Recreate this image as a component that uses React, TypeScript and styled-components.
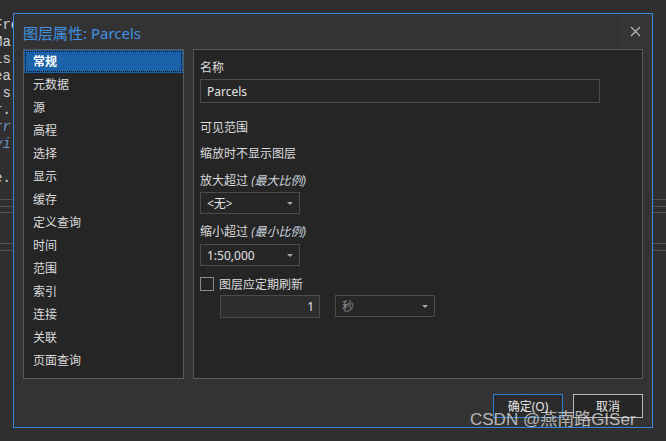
import React from "react";
import styled, { createGlobalStyle } from "styled-components";

const GlobalStyle = createGlobalStyle`
  html, body {
    margin: 0;
    padding: 0;
    background: #2f2f2f;
  }
  * {
    box-sizing: border-box;
  }
`;

const UI_FONT = `"Segoe UI", "Noto Sans", "Noto Sans CJK SC", sans-serif`;

const tabs = [
  "常规",
  "元数据",
  "源",
  "高程",
  "选择",
  "显示",
  "缓存",
  "定义查询",
  "时间",
  "范围",
  "索引",
  "连接",
  "关联",
  "页面查询",
];

const codeLines = [
  { text: "Frc", hint: false },
  { text: "Ma", hint: false },
  { text: "is", hint: false },
  { text: "ea", hint: false },
  { text: ".s", hint: false },
  { text: "r.", hint: false },
  { text: "rr.", hint: true },
  { text: "yi", hint: true },
  { text: " ", hint: false },
  { text: "e.", hint: false },
];

export default function App() {
  return (
    <>
      <GlobalStyle />
      <Desktop>
        <Backdrop>
          <Code>
            {codeLines.map((line, i) => (
              <CodeLine key={i} $hint={line.hint}>
                {line.text}
              </CodeLine>
            ))}
          </Code>
          <Rules>
            <Rule $gap={0} />
            <Rule $gap={6} />
            <Rule $gap={5} />
            <Rule $gap={30} />
            <Rule $gap={6} />
          </Rules>
        </Backdrop>

        <Dialog>
          <TitleBar>
            <Title>图层属性: Parcels</Title>
            <CloseButton aria-label="关闭">
              <svg width="11" height="11" viewBox="0 0 11 11">
                <path
                  d="M1 1 L10 10 M10 1 L1 10"
                  stroke="#b5b5b5"
                  strokeWidth="1.3"
                  fill="none"
                />
              </svg>
            </CloseButton>
          </TitleBar>

          <Body>
            <TabList>
              {tabs.map((name, i) => (
                <TabItem key={name} $active={i === 0}>
                  {name}
                </TabItem>
              ))}
            </TabList>

            <Page>
              <Label $top={10}>名称</Label>
              <TextBox $top={3}>Parcels</TextBox>

              <Label $top={17}>可见范围</Label>
              <Label $top={10}>缩放时不显示图层</Label>

              <Label $top={11}>
                放大超过 <Hint>(最大比例)</Hint>
              </Label>
              <Combo $top={3}>
                <span>&lt;无&gt;</span>
                <Caret />
              </Combo>

              <Label $top={10}>
                缩小超过 <Hint>(最小比例)</Hint>
              </Label>
              <Combo $top={4}>
                <span>1:50,000</span>
                <Caret />
              </Combo>

              <CheckRow>
                <CheckBox />
                <span>图层应定期刷新</span>
              </CheckRow>
              <IntervalRow>
                <NumberBox>1</NumberBox>
                <Combo $top={0} $muted>
                  <span>秒</span>
                  <Caret />
                </Combo>
              </IntervalRow>
            </Page>
          </Body>

          <Footer>
            <Button $primary>确定(O)</Button>
            <Button>取消</Button>
          </Footer>
        </Dialog>

        <Watermark>CSDN @燕南路GISer</Watermark>
      </Desktop>
    </>
  );
}

const Desktop = styled.div`
  position: relative;
  width: 666px;
  height: 441px;
  overflow: hidden;
  background: #2f2f2f;
  font-family: ${UI_FONT};
`;

const Backdrop = styled.div`
  position: absolute;
  inset: 0;
`;

const Code = styled.div`
  display: flex;
  flex-direction: column;
  padding-top: 17px;
  margin-left: -6px;
  font-family: "Liberation Mono", "DejaVu Sans Mono", monospace;
  font-size: 14px;
  line-height: 17px;
`;

const CodeLine = styled.div<{ $hint: boolean }>`
  white-space: pre;
  color: ${(p) => (p.$hint ? "#6f8fc4" : "#d0d0d0")};
  font-style: ${(p) => (p.$hint ? "italic" : "normal")};
`;

const Rules = styled.div`
  display: flex;
  flex-direction: column;
  margin-top: 12px;
`;

const Rule = styled.div<{ $gap: number }>`
  height: 1px;
  margin-top: ${(p) => p.$gap}px;
  background: #505050;
`;

const Dialog = styled.div`
  position: absolute;
  left: 13px;
  top: 13px;
  width: 640px;
  height: 415px;
  display: flex;
  flex-direction: column;
  border: 1px solid #3686da;
  background: #333333;
`;

const TitleBar = styled.div`
  height: 35px;
  display: flex;
  align-items: center;
  justify-content: space-between;
  padding-left: 9px;
`;

const Title = styled.div`
  color: #3f92e4;
  font-size: 15px;
  margin-top: 1px;
`;

const CloseButton = styled.div`
  width: 34px;
  height: 34px;
  display: flex;
  align-items: center;
  justify-content: center;
  background: #363636;
  align-self: flex-start;
`;

const Body = styled.div`
  display: flex;
  gap: 9px;
  padding: 0 9px;
  height: 330px;
`;

const Panel = styled.div`
  border: 1px solid #595959;
  background: #252525;
`;

const TabList = styled(Panel)`
  width: 161px;
  display: flex;
  flex-direction: column;
`;

const TabItem = styled.div<{ $active: boolean }>`
  height: 23px;
  display: flex;
  align-items: center;
  padding: 0 0 2px 9px;
  font-size: 12px;
  color: ${(p) => (p.$active ? "#ffffff" : "#dcdcdc")};
  font-weight: ${(p) => (p.$active ? 700 : 400)};
  background: ${(p) => (p.$active ? "#1c62aa" : "transparent")};
  outline: ${(p) => (p.$active ? "1px dotted #0d0d0d" : "none")};
  outline-offset: -2px;
`;

const Page = styled(Panel)`
  flex: 1;
  display: flex;
  flex-direction: column;
  align-items: flex-start;
  padding-left: 6px;
`;

const Label = styled.div<{ $top: number }>`
  margin-top: ${(p) => p.$top}px;
  height: 16px;
  line-height: 16px;
  font-size: 12px;
  color: #dcdcdc;
  white-space: pre;
`;

const Hint = styled.span`
  font-style: italic;
  color: #c9d2dd;
`;

const TextBox = styled.div<{ $top: number }>`
  margin-top: ${(p) => p.$top}px;
  width: 400px;
  height: 24px;
  display: flex;
  align-items: center;
  padding-left: 6px;
  border: 1px solid #4b4b4b;
  background: #262626;
  font-size: 12px;
  color: #e2e2e2;
`;

const Combo = styled.div<{ $top: number; $muted?: boolean }>`
  margin-top: ${(p) => p.$top}px;
  width: 100px;
  height: 22px;
  display: flex;
  align-items: center;
  justify-content: space-between;
  padding: 0 6px 0 6px;
  border: 1px solid #4b4b4b;
  background: #262626;
  font-size: 12px;
  color: ${(p) => (p.$muted ? "#8c8c8c" : "#e2e2e2")};
`;

const Caret = styled.i`
  width: 0;
  height: 0;
  border-left: 3px solid transparent;
  border-right: 3px solid transparent;
  border-top: 3px solid #a8a8a8;
`;

const CheckRow = styled.div`
  margin-top: 10px;
  height: 16px;
  display: flex;
  align-items: center;
  gap: 5px;
  font-size: 12px;
  color: #dcdcdc;
`;

const CheckBox = styled.div`
  width: 14px;
  height: 14px;
  border: 1px solid #8a8a8a;
  background: #252525;
`;

const IntervalRow = styled.div`
  margin-top: 3px;
  margin-left: 20px;
  display: flex;
  gap: 15px;
`;

const NumberBox = styled.div`
  width: 100px;
  height: 23px;
  display: flex;
  align-items: center;
  justify-content: flex-end;
  padding-right: 5px;
  border: 1px solid #4b4b4b;
  background: #2d2d2d;
  font-size: 12px;
  color: #e2e2e2;
`;

const Footer = styled.div`
  display: flex;
  justify-content: flex-end;
  gap: 10px;
  padding: 15px 9px 0 0;
`;

const Button = styled.div<{ $primary?: boolean }>`
  width: 70px;
  height: 24px;
  display: flex;
  align-items: center;
  justify-content: center;
  font-size: 12px;
  color: #e6e6e6;
  background: ${(p) => (p.$primary ? "#2b2b2b" : "#262626")};
  border: 1px solid ${(p) => (p.$primary ? "#2f7fd2" : "#b9b9b9")};
`;

const Watermark = styled.div`
  position: absolute;
  left: 470px;
  top: 405px;
  font-family: "Liberation Sans", "Noto Sans CJK SC", sans-serif;
  font-size: 17px;
  color: rgba(235, 235, 235, 0.72);
  white-space: nowrap;
`;
